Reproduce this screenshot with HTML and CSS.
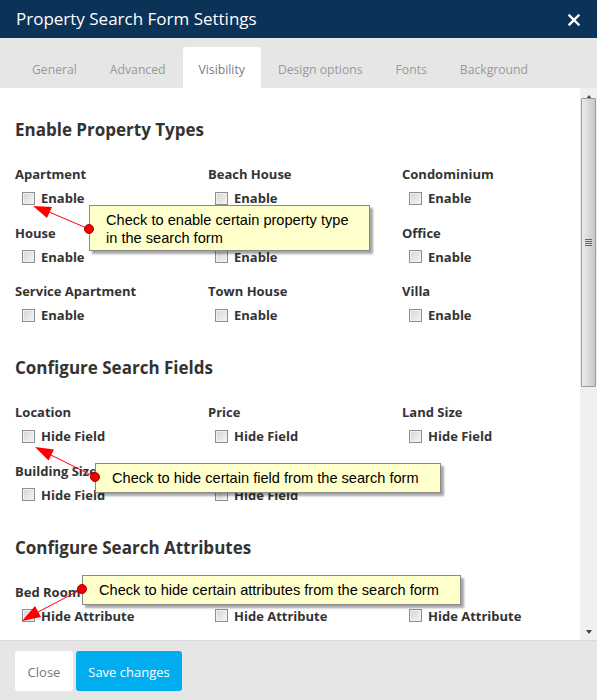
FILE: index.html
```html
<!DOCTYPE html>
<html>
<head>
<meta charset="utf-8">
<link rel="stylesheet" href="styles.css">
</head>
<body>
<div class="modal">
  <div class="header">
    <div class="title">Property Search Form Settings</div>
    <svg class="close-x" width="12" height="12" viewBox="0 0 12 12"><path d="M1.5 1.5 L10.5 10.5 M10.5 1.5 L1.5 10.5" stroke="#fff" stroke-width="2.4" stroke-linecap="square"/></svg>
  </div>
  <div class="tabs">
    <div class="tab">General</div>
    <div class="tab">Advanced</div>
    <div class="tab active">Visibility</div>
    <div class="tab">Design options</div>
    <div class="tab">Fonts</div>
    <div class="tab">Background</div>
  </div>
  <div class="body">
    <div class="content">
      <h3 class="sec first">Enable Property Types</h3>
      <div class="grid">
        <div class="item"><div class="lbl">Apartment</div><div class="chk"><span class="box"></span>Enable</div></div>
        <div class="item"><div class="lbl">Beach House</div><div class="chk"><span class="box"></span>Enable</div></div>
        <div class="item"><div class="lbl">Condominium</div><div class="chk"><span class="box"></span>Enable</div></div>
        <div class="item"><div class="lbl">House</div><div class="chk"><span class="box"></span>Enable</div></div>
        <div class="item"><div class="lbl">Land</div><div class="chk"><span class="box"></span>Enable</div></div>
        <div class="item"><div class="lbl">Office</div><div class="chk"><span class="box"></span>Enable</div></div>
        <div class="item"><div class="lbl">Service Apartment</div><div class="chk"><span class="box"></span>Enable</div></div>
        <div class="item"><div class="lbl">Town House</div><div class="chk"><span class="box"></span>Enable</div></div>
        <div class="item"><div class="lbl">Villa</div><div class="chk"><span class="box"></span>Enable</div></div>
      </div>
      <h3 class="sec">Configure Search Fields</h3>
      <div class="grid">
        <div class="item"><div class="lbl">Location</div><div class="chk"><span class="box"></span>Hide Field</div></div>
        <div class="item"><div class="lbl">Price</div><div class="chk"><span class="box"></span>Hide Field</div></div>
        <div class="item"><div class="lbl">Land Size</div><div class="chk"><span class="box"></span>Hide Field</div></div>
        <div class="item"><div class="lbl">Building Size</div><div class="chk"><span class="box"></span>Hide Field</div></div>
        <div class="item"><div class="lbl">Keyword</div><div class="chk"><span class="box"></span>Hide Field</div></div>
      </div>
      <h3 class="sec">Configure Search Attributes</h3>
      <div class="grid">
        <div class="item"><div class="lbl">Bed Room</div><div class="chk"><span class="box"></span>Hide Attribute</div></div>
        <div class="item"><div class="lbl">Bath Room</div><div class="chk"><span class="box"></span>Hide Attribute</div></div>
        <div class="item"><div class="lbl">Garage</div><div class="chk"><span class="box"></span>Hide Attribute</div></div>
      </div>
    </div>
    <div class="scrollbar">
      <div class="sb-arrow up"></div>
      <div class="sb-track">
        <div class="sb-thumb"><span class="grip"></span></div>
      </div>
      <div class="sb-arrow down"></div>
    </div>
  </div>
  <div class="footer">
    <button class="btn btn-close">Close</button>
    <button class="btn btn-save">Save changes</button>
  </div>

  <svg class="arrows" width="597" height="700" viewBox="0 0 597 700">
    <g stroke="#ff0000" stroke-width="1" fill="#ff0000">
      <line x1="89" y1="229" x2="49" y2="212"/>
      <polygon points="33,206 52,207 47,218" stroke="none"/>
      <line x1="95" y1="477" x2="51" y2="455"/>
      <polygon points="35,447 54,449.5 48.5,460.5" stroke="none"/>
      <line x1="82" y1="589" x2="38" y2="612"/>
      <polygon points="22,621 41,617 35,606" stroke="none"/>
    </g>
  </svg>
  <div class="callout c1">Check to enable certain property type<br>in the search form</div>
  <div class="callout c2">Check to hide certain field from the search form</div>
  <div class="callout c3">Check to hide certain attributes from the search form</div>
  <svg class="dots" width="597" height="700" viewBox="0 0 597 700">
    <g fill="#ee0000" stroke="#b00000" stroke-width="1">
      <circle cx="89" cy="229" r="4.5"/>
      <circle cx="95" cy="477" r="4.5"/>
      <circle cx="82" cy="589" r="4.5"/>
    </g>
  </svg>
</div>
</body>
</html>
```

FILE: styles.css
```css
* { box-sizing: border-box; }
html, body { margin: 0; padding: 0; }
body {
  width: 597px;
  height: 700px;
  overflow: hidden;
  font-family: "Open Sans", "Liberation Sans", sans-serif;
  background: #fff;
}
.modal {
  position: relative;
  width: 597px;
  height: 700px;
  display: flex;
  flex-direction: column;
}
.header {
  height: 38px;
  background: #0b3257;
  display: flex;
  align-items: center;
  justify-content: space-between;
  padding: 0 17px 0 16px;
}
.title {
  color: #fff;
  font-size: 17px;
  line-height: 24px;
  margin-top: -1px;
}
.close-x { margin-top: 2px; }
.tabs {
  height: 50px;
  background: #e6e6e6;
  display: flex;
  align-items: flex-end;
  padding-left: 16px;
}
.tab {
  height: 41px;
  padding: 0 16px;
  margin-right: 1px;
  font-size: 12.2px;
  line-height: 46px;
  color: #999;
  border-radius: 4px 4px 0 0;
}
.tab.active {
  background: #fff;
  color: #7a7a88;
}
.body {
  flex: 1;
  display: flex;
  overflow: hidden;
  background: #fff;
}
.content {
  flex: 1;
  overflow: hidden;
  padding: 0 0 0 15px;
}
.sec {
  margin: 31px 0 0 0;
  font-size: 17px;
  line-height: 24px;
  font-weight: 700;
  color: #333;
}
.sec.first { margin-top: 30px; }
.grid {
  margin-top: 23px;
  display: grid;
  grid-template-columns: 193px 194px 170px;
  row-gap: 15.5px;
}
.lbl {
  font-size: 13px;
  line-height: 18px;
  font-weight: 700;
  color: #333;
  white-space: nowrap;
}
.chk {
  margin-top: 5px;
  height: 20px;
  display: flex;
  align-items: center;
  font-size: 13px;
  font-weight: 700;
  color: #333;
  padding-left: 7px;
  white-space: nowrap;
}
.box {
  width: 13px;
  height: 13px;
  border: 1px solid #8e8e8e;
  background: linear-gradient(135deg, #d4d4d4, #f6f6f6);
  box-shadow: inset 0 0 0 1px #f0f0f0;
  margin-right: 6px;
}
.scrollbar {
  width: 17px;
  background: #f0f0f0;
  display: flex;
  flex-direction: column;
}
.sb-arrow {
  height: 17px;
  display: flex;
  align-items: center;
  justify-content: center;
}
.sb-arrow::before {
  content: "";
  width: 0;
  height: 0;
  border-left: 3.5px solid transparent;
  border-right: 3.5px solid transparent;
}
.sb-arrow.up::before { border-bottom: 4px solid #444; }
.sb-arrow.down::before { border-top: 4px solid #444; }
.sb-track {
  flex: 1;
  padding: 0 1px;
}
.sb-thumb {
  height: 289px;
  margin-top: -7px;
  border: 1px solid #9a9a9a;
  border-radius: 1px;
  background: linear-gradient(to right, #ececec, #d6d6d6 60%, #c8c8c8);
  display: flex;
  align-items: center;
  justify-content: center;
}
.grip {
  width: 7px;
  height: 7px;
  background: repeating-linear-gradient(to bottom, #666 0 1px, transparent 1px 2px);
}
.footer {
  height: 60px;
  background: #e6e6e6;
  border-top: 1px solid #dadada;
  display: flex;
  align-items: center;
  padding-left: 15px;
  gap: 3px;
}
.btn {
  height: 40px;
  border: none;
  border-radius: 3px;
  font-family: "Open Sans", "Liberation Sans", sans-serif;
  font-size: 13px;
  padding: 2px 0 0 0;
  white-space: nowrap;
}
.btn-close {
  background: #fff;
  color: #777;
  width: 58px;
}
.btn-save {
  background: #00aeef;
  color: #fff;
  width: 106px;
}
.arrows, .dots {
  position: absolute;
  left: 0;
  top: 0;
  pointer-events: none;
}
.callout {
  position: absolute;
  background: #ffffcc;
  border: 1px solid #8a8a8a;
  box-shadow: 3px 3px 2px rgba(0, 0, 0, 0.35);
  font-family: "Liberation Sans", Arial, sans-serif;
  font-size: 14.6px;
  color: #000;
  line-height: 18px;
  white-space: nowrap;
}
.c1 {
  left: 89px;
  top: 205px;
  width: 281px;
  height: 46px;
  padding: 5px 0 0 16px;
}
.c2 {
  left: 95px;
  top: 463px;
  width: 346px;
  height: 30px;
  padding: 5px 0 0 16px;
}
.c3 {
  left: 82px;
  top: 575px;
  width: 379px;
  height: 30px;
  padding: 5px 0 0 16px;
}
```
